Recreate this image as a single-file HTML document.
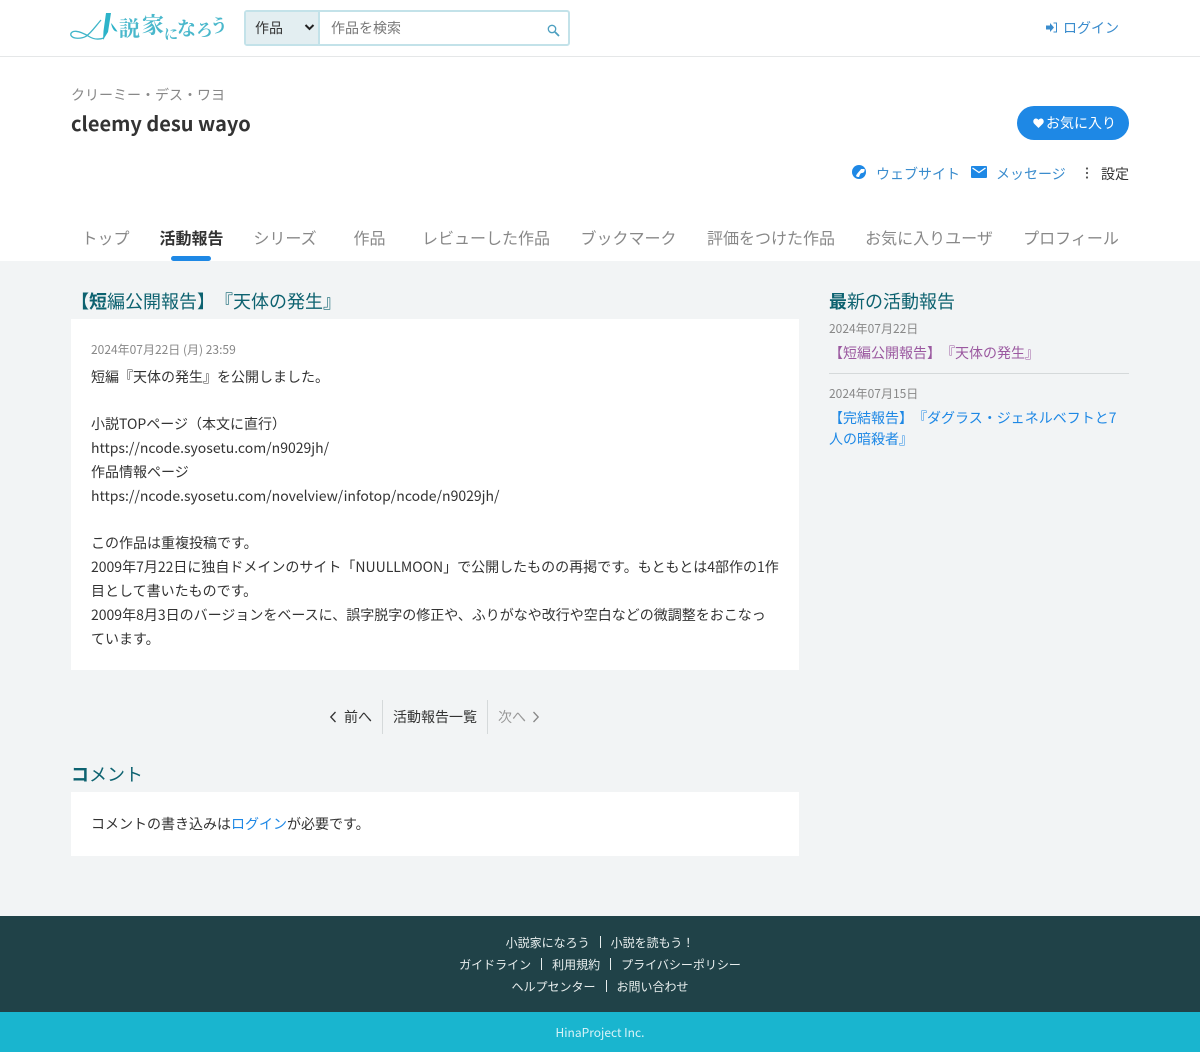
<!DOCTYPE html>
<html lang="ja"><head><meta charset="utf-8"><title>活動報告</title>
<style>
*{box-sizing:border-box;text-spacing-trim:space-all}
html,body{margin:0;padding:0}
body{width:1200px;height:1052px;position:relative;overflow:hidden;background:#f2f4f5;color:#333;font-family:"Noto Sans CJK JP",sans-serif}
.a{position:absolute;white-space:nowrap}
.tab{position:absolute;top:225px;font-size:16px;line-height:24px;color:#888;white-space:nowrap;transform:translateX(-50%)}
.card{position:absolute;left:71px;width:728px;background:#fff}
.l{position:absolute;left:91px;font-size:14px;line-height:24px;color:#333;white-space:nowrap}
.f{position:absolute;left:0;width:1200px;text-align:center;color:#e8eeee;font-size:12px;line-height:22px}
.f i{display:inline-block;width:1px;height:12px;background:#e8eeee;margin:0 10px 0 10px;vertical-align:-1px}
.s{position:absolute;font-family:"Noto Serif CJK SC",serif;font-weight:700;color:#4ab8cc;white-space:nowrap}
</style></head><body>
<div class="a" style="left:0;top:0;width:1200px;height:261px;background:#fff"></div>
<div class="a" style="left:0;top:56px;width:1200px;height:1px;background:#e5e7e8"></div>

<svg class="a" style="left:70px;top:12px" width="50" height="32" viewBox="0 0 50 32"><path d="M31 8C25 15 21 21 16 24.300C11 27 3 27 1 23.500C0 20.500 3 19 6 19.300C11 19.800 15 22 19 24.500C23 27 28 28 34 26" fill="none" stroke="#3fb5c9" stroke-width="1.300"/><path d="M36 1L41 1L38 20L33 28L33.500 19Z" fill="#2db3c9"/><path d="M41 11C43 13 45 16 47.500 19.500C44 20 42 16 41 11Z" fill="#2db3c9"/></svg>
<div class="s" style="left:100px;top:12px;font-size:18px;line-height:28px;opacity:0">小</div>
<div class="s" style="left:119px;top:14px;font-size:21px;line-height:28px">説</div>
<div class="s" style="left:142px;top:11px;font-size:22px;line-height:28px">家</div>
<div class="s" style="left:164px;top:22px;font-size:14px;line-height:24px">に</div>
<div class="s" style="left:177px;top:15px;font-size:19px;line-height:26px">な</div>
<div class="s" style="left:196px;top:16px;font-size:17px;line-height:26px">ろ</div>
<div class="s" style="left:210px;top:12px;font-size:18px;line-height:26px">う</div>

<div class="a" style="left:244px;top:10px;width:326px;height:36px;border:2px solid #c3e2e9;border-radius:3px;background:#fff"></div>
<div class="a" style="left:246px;top:12px;width:74px;height:32px;background:#e3eef1;border-right:2px solid #c3e2e9"></div>
<div class="a" style="left:255px;top:17px;font-size:14px;line-height:23px;color:#333">作品</div>
<svg class="a" style="left:304px;top:23px" width="11" height="9" viewBox="0 0 11 9"><path d="M1.500 2L5.500 6L9.500 2" fill="none" stroke="#222" stroke-width="2"/></svg>
<div class="a" style="left:331px;top:17px;font-size:14px;line-height:23px;color:#777">作品を検索</div>
<svg class="a" style="left:547px;top:24px" width="13" height="13" viewBox="0 0 13 13"><circle cx="5" cy="5" r="3.700" fill="none" stroke="#4c9fc0" stroke-width="1.300"/><path d="M8 8L12 12" stroke="#4c9fc0" stroke-width="1.800"/></svg>

<svg class="a" style="left:1046px;top:22px" width="11" height="11" viewBox="0 0 11 11"><path d="M0 3.500h4V1l4 4.500L4 10V7.500H0Z" fill="#3a8ccd"/><path d="M7.500 1H10.500V10H7.500" fill="none" stroke="#3a8ccd" stroke-width="1"/></svg>
<div class="a" style="left:1063px;top:17px;font-size:14px;line-height:23px;color:#3a8ccd">ログイン</div>

<div class="a" style="left:71px;top:85px;font-size:14px;line-height:21px;color:#888">クリーミー・デス・ワヨ</div>
<div class="a" style="left:71px;top:107px;font-size:20px;line-height:32px;font-weight:700;color:#333">cleemy desu wayo</div>

<div class="a" style="left:1017px;top:106px;width:112px;height:34px;border-radius:17px;background:#1e88e5"></div>
<svg class="a" style="left:1033px;top:118px" width="11" height="10" viewBox="0 0 11 10"><path d="M5.500 10L1 5.500C-.5 3.500.5.500 3 .5C4.200.5 5 1.200 5.500 2C6 1.200 6.800.5 8 .5C10.500.5 11.500 3.500 10 5.500Z" fill="#fff"/></svg>
<div class="a" style="left:1046px;top:113px;font-size:14px;line-height:21px;color:#fff">お気に入り</div>

<svg class="a" style="left:852px;top:165px" width="14" height="14" viewBox="0 0 14 14"><circle cx="7" cy="7" r="7" fill="#1e88e5"/><path d="M4 11C5 8 8 6 9 4L12.500 4C13 6 12 8 10 8C8 8 8 10 7 12C6 12 5 12 4 11Z" fill="#fff"/></svg>
<div class="a" style="left:876px;top:163px;font-size:14px;line-height:23px;color:#3a8ccd">ウェブサイト</div>
<svg class="a" style="left:971px;top:166px" width="16" height="12" viewBox="0 0 16 12"><rect width="16" height="12" rx="1" fill="#1e88e5"/><path d="M1.500 2L8 6.500L14.500 2" fill="none" stroke="#fff" stroke-width="1.300"/></svg>
<div class="a" style="left:996px;top:163px;font-size:14px;line-height:23px;color:#3a8ccd">メッセージ</div>
<svg class="a" style="left:1085px;top:167px" width="4" height="12" viewBox="0 0 4 12"><circle cx="2" cy="1.500" r="1.100" fill="#555"/><circle cx="2" cy="6" r="1.100" fill="#555"/><circle cx="2" cy="10.500" r="1.100" fill="#555"/></svg>
<div class="a" style="left:1101px;top:163px;font-size:14px;line-height:23px;color:#333">設定</div>

<div class="tab" style="left:105.500px">トップ</div>
<div class="tab" style="left:191.500px;color:#333;font-weight:700">活動報告</div>
<div class="tab" style="left:285px">シリーズ</div>
<div class="tab" style="left:369.500px">作品</div>
<div class="tab" style="left:486px">レビューした作品</div>
<div class="tab" style="left:628.500px">ブックマーク</div>
<div class="tab" style="left:771px">評価をつけた作品</div>
<div class="tab" style="left:929px">お気に入りユーザ</div>
<div class="tab" style="left:1071px">プロフィール</div>
<div class="a" style="left:171px;top:256px;width:40px;height:5px;border-radius:3px;background:#1e88e5"></div>

<div class="a" style="left:71px;top:287px;font-size:18px;line-height:28px;color:#0d6270"><span style="font-weight:700">【短</span>編公開報告】『天体の発生』</div>
<div class="card" style="top:319px;height:351px"></div>
<div class="a" style="left:91px;top:340px;font-size:12px;line-height:19px;color:#888">2024年07月22日 (月) 23:59</div>
<div class="l" style="top:365px">短編『天体の発生』を公開しました。</div>
<div class="l" style="top:412px">小説TOPページ（本文に直行）</div>
<div class="l" style="top:436px">https://ncode.syosetu.com/n9029jh/</div>
<div class="l" style="top:460px">作品情報ページ</div>
<div class="l" style="top:484px">https://ncode.syosetu.com/novelview/infotop/ncode/n9029jh/</div>
<div class="l" style="top:531px">この作品は重複投稿です。</div>
<div class="l" style="top:555px">2009年7月22日に独自ドメインのサイト「NUULLMOON」で公開したものの再掲です。もともとは4部作の1作</div>
<div class="l" style="top:579px">目として書いたものです。</div>
<div class="l" style="top:603px">2009年8月3日のバージョンをベースに、誤字脱字の修正や、ふりがなや改行や空白などの微調整をおこなっ</div>
<div class="l" style="top:627px">ています。</div>

<svg class="a" style="left:329px;top:711px" width="8" height="12" viewBox="0 0 8 12"><path d="M6.500 1L1.800 6L6.500 11" fill="none" stroke="#333" stroke-width="1.300"/></svg>
<div class="a" style="left:344px;top:707px;font-size:14px;line-height:21px;color:#333">前へ</div>
<div class="a" style="left:382px;top:700px;width:1px;height:34px;background:#d5d9da"></div>
<div class="a" style="left:393px;top:707px;font-size:14px;line-height:21px;color:#333">活動報告一覧</div>
<div class="a" style="left:487px;top:700px;width:1px;height:34px;background:#d5d9da"></div>
<div class="a" style="left:498px;top:707px;font-size:14px;line-height:21px;color:#999">次へ</div>
<svg class="a" style="left:532px;top:711px" width="8" height="12" viewBox="0 0 8 12"><path d="M1.500 1L6.200 6L1.500 11" fill="none" stroke="#888" stroke-width="1.300"/></svg>

<div class="a" style="left:71px;top:760px;font-size:18px;line-height:28px;color:#0d6270"><span style="font-weight:700">コ</span>メント</div>
<div class="card" style="top:792px;height:64px"></div>
<div class="a" style="left:91px;top:814px;font-size:14px;line-height:21px;color:#333">コメントの書き込みは<span style="color:#1e88e5">ログイン</span>が必要です。</div>

<div class="a" style="left:829px;top:287px;font-size:18px;line-height:28px;color:#0d6270"><span style="font-weight:700">最</span>新の活動報告</div>
<div class="a" style="left:829px;top:320px;font-size:12px;line-height:18px;color:#888">2024年07月22日</div>
<div class="a" style="left:829px;top:343px;font-size:14px;line-height:21px;color:#9b59a0">【短編公開報告】『天体の発生』</div>
<div class="a" style="left:829px;top:373px;width:300px;height:1px;background:#d5d9da"></div>
<div class="a" style="left:829px;top:385px;font-size:12px;line-height:18px;color:#888">2024年07月15日</div>
<div class="a" style="left:829px;top:408px;font-size:14px;line-height:21px;color:#1e88e5">【完結報告】『ダグラス・ジェネルベフトと7<br>人の暗殺者』</div>

<div class="a" style="left:0;top:916px;width:1200px;height:96px;background:#204248"></div>
<div class="f" style="top:932px">小説家になろう<i></i>小説を読もう！</div>
<div class="f" style="top:954px">ガイドライン<i></i>利用規約<i></i>プライバシーポリシー</div>
<div class="f" style="top:976px">ヘルプセンター<i></i>お問い合わせ</div>
<div class="a" style="left:0;top:1012px;width:1200px;height:40px;background:#19b5cf"></div>
<div class="f" style="top:1022px;line-height:21px;color:#d8f3f8">HinaProject Inc.</div>
</body></html>
